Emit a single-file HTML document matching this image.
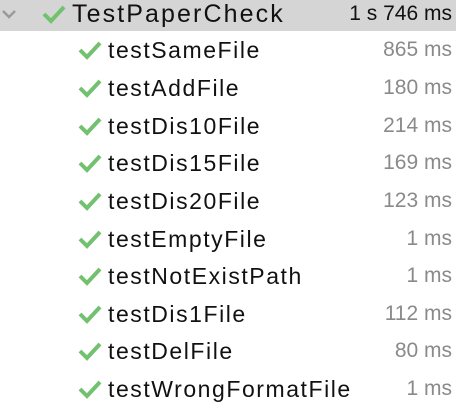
<html><body style="margin:0;width:456px;height:411px;background:#fff;overflow:hidden;font-family:'Liberation Sans',sans-serif;font-size:21px;position:relative">
<div style="position:absolute;left:0;top:0;width:456px;height:31px;background:#d5d5d5"></div>
<svg style="position:absolute;left:0;top:5px" width="20" height="20"><path d="M3 6 L9 12 L15 6" fill="none" stroke="#9a9a9a" stroke-width="2.5"/></svg>
<div id="rows"></div>
<script>
var d=[["TestPaperCheck","1 s 746 ms",14,1],["testSameFile","865 ms",50],["testAddFile","180 ms",88],["testDis10File","214 ms",126],["testDis15File","169 ms",163],["testDis20File","123 ms",201],["testEmptyFile","1 ms",239],["testNotExistPath","1 ms",276],["testDis1File","112 ms",314],["testDelFile","80 ms",351],["testWrongFormatFile","1 ms",389]];
var h="";d.forEach(function(r){var x=r[3]?42:78,c=r[2];
h+='<svg style="position:absolute;left:'+x+'px;top:'+(c-10)+'px" width="24" height="20"><path d="M2 10 L9 17 L22 3" fill="none" stroke="#72c16e" stroke-width="4"/></svg>';
h+='<div style="position:absolute;left:'+(x+30)+'px;top:'+(c-14)+'px;color:#111;line-height:28px;white-space:nowrap;font-size:'+(r[3]?25:23)+'px;letter-spacing:'+(r[3]?2.1:1.55)+'px">'+r[0]+'</div>';
h+='<div style="position:absolute;right:4px;top:'+(c-13)+'px;line-height:26px;color:'+(r[3]?'#111':'#8a8a8a')+'">'+r[1]+'</div>';});
document.getElementById('rows').innerHTML=h;
</script></body></html>
